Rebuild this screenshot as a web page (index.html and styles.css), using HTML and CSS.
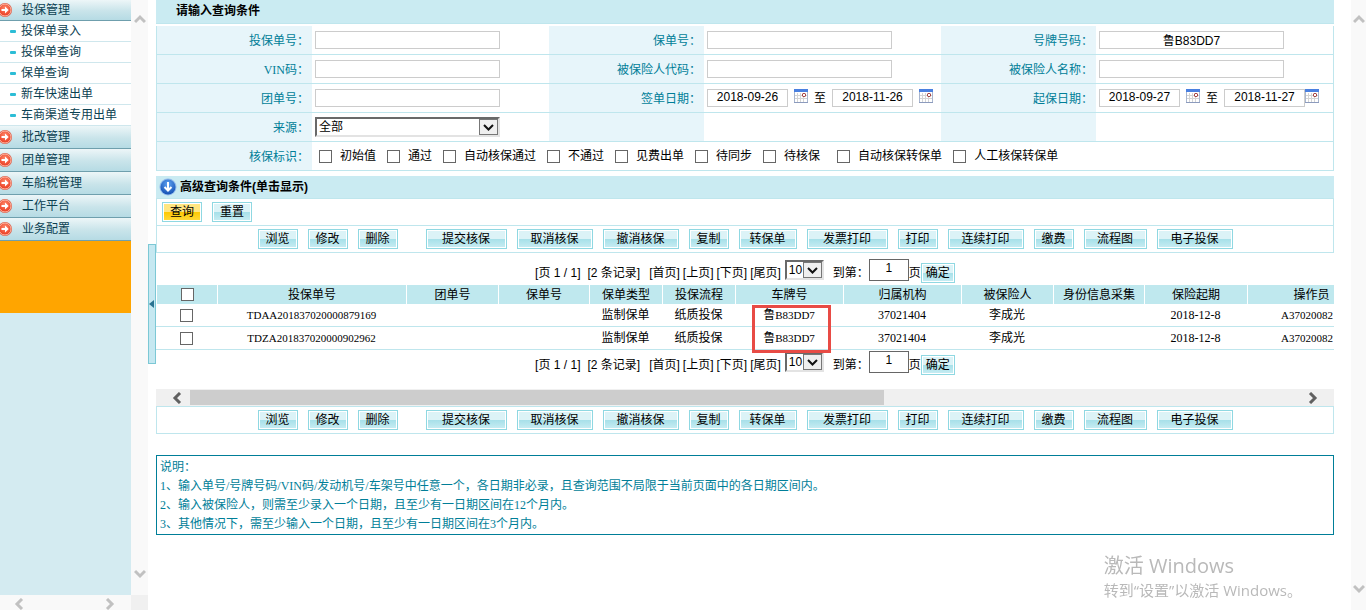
FILE: index.html
```html
<!DOCTYPE html>
<html lang="zh-CN">

<head>
  <meta charset="UTF-8" />
  <meta name="viewport" content="width=device-width, initial-scale=1.0" />
  <title>投保单查询</title>
  <link rel="stylesheet" href="styles.css">
</head>

<body>
  <!-- 图标 -->
  <svg class="icons" width="0" height="0">
    <defs>
      <radialGradient id="red" cx="50%" cy="35%" r="65%">
        <stop offset="0" stop-color="#ff8a6c" />
        <stop offset="1" stop-color="#e8391f" />
      </radialGradient>
      <radialGradient id="blue" cx="50%" cy="30%" r="70%">
        <stop offset="0" stop-color="#5fa4f2" />
        <stop offset="1" stop-color="#1450b4" />
      </radialGradient>
      <symbol id="i-go" viewBox="0 0 14 14">
        <circle cx="7" cy="7" r="7" fill="#d9553f" />
        <circle cx="7" cy="7" r="6" fill="url(#red)" stroke="#ffb9a6" stroke-width="1" />
        <path d="M3.5 6H7V3.5L10.7 7 7 10.500V8H3.500z" fill="#fff" />
      </symbol>
      <symbol id="i-down" viewBox="0 0 18 18">
        <circle cx="9" cy="9" r="8.500" fill="#8fb9ea" />
        <circle cx="9" cy="9" r="7.500" fill="url(#blue)" />
        <path d="M9 4v8M5.500 9L9 12.500 12.500 9" fill="none" stroke="#fff" stroke-width="2" />
      </symbol>
      <symbol id="i-cal" viewBox="0 0 14 14">
        <rect x="0.500" y="0.500" width="13" height="13" fill="#fff" stroke="#a9b6cf" />
        <rect width="14" height="3" fill="#4a80e0" />
        <path d="M1 6.500H13M1 9.500H13M3.500 4V13M6.500 4V13M9.500 4V13" stroke="#d4d4d4" />
        <path d="M0 13.500H14" stroke="#8c9bbd" />
        <rect x="8.500" y="4.500" width="3" height="3" rx="1" fill="#fff" stroke="#8e1414" />
      </symbol>
      <symbol id="i-up" viewBox="0 0 12 10">
        <path d="M1 8L6 3L11 8" fill="none" stroke="currentColor" stroke-width="3" />
      </symbol>
      <symbol id="i-dn" viewBox="0 0 12 10">
        <path d="M1 2L6 7L11 2" fill="none" stroke="currentColor" stroke-width="3" />
      </symbol>
      <symbol id="i-left" viewBox="0 0 10 12">
        <path d="M8 1L3 6L8 11" fill="none" stroke="currentColor" stroke-width="3" />
      </symbol>
      <symbol id="i-right" viewBox="0 0 10 12">
        <path d="M2 1L7 6L2 11" fill="none" stroke="currentColor" stroke-width="3" />
      </symbol>
    </defs>
  </svg>

  <div class="page">
    <!-- 左侧菜单 -->
    <aside class="side">
      <div class="side-body">
        <nav class="menu">
          <a class="menu-title first" href="#"><svg><use href="#i-go" /></svg>投保管理</a>
          <a class="menu-item" href="#">投保单录入</a>
          <a class="menu-item" href="#">投保单查询</a>
          <a class="menu-item" href="#">保单查询</a>
          <a class="menu-item" href="#">新车快速出单</a>
          <a class="menu-item" href="#">车商渠道专用出单</a>
          <a class="menu-title" href="#"><svg><use href="#i-go" /></svg>批改管理</a>
          <a class="menu-title" href="#"><svg><use href="#i-go" /></svg>团单管理</a>
          <a class="menu-title" href="#"><svg><use href="#i-go" /></svg>车船税管理</a>
          <a class="menu-title" href="#"><svg><use href="#i-go" /></svg>工作平台</a>
          <a class="menu-title" href="#"><svg><use href="#i-go" /></svg>业务配置</a>
          <div class="menu-block"></div>
        </nav>
        <div class="vscroll"><svg><use href="#i-up" /></svg><svg><use href="#i-dn" /></svg></div>
      </div>
      <div class="side-foot">
        <div class="side-hscroll"><svg><use href="#i-left" /></svg><svg><use href="#i-right" /></svg></div>
      </div>
    </aside>
    <div class="gutter"><button class="fold" aria-label="收起菜单"></button></div>

    <!-- 右侧内容 -->
    <main class="main">
      <h2 class="bar bar-query">请输入查询条件</h2>
      <table class="form">
        <colgroup>
          <col class="c-label"><col><col class="c-label"><col><col class="c-label"><col>
        </colgroup>
        <tr>
          <th><label for="proposalNo">投保单号：</label></th>
          <td><input class="text" id="proposalNo" type="text"></td>
          <th><label for="policyNo">保单号：</label></th>
          <td><input class="text" id="policyNo" type="text"></td>
          <th><label for="licenseNo">号牌号码：</label></th>
          <td><input class="text" id="licenseNo" type="text" value="鲁B83DD7"></td>
        </tr>
        <tr>
          <th><label for="vin">VIN码：</label></th>
          <td><input class="text" id="vin" type="text"></td>
          <th><label for="insuredCode">被保险人代码：</label></th>
          <td><input class="text" id="insuredCode" type="text"></td>
          <th><label for="insuredName">被保险人名称：</label></th>
          <td><input class="text" id="insuredName" type="text"></td>
        </tr>
        <tr>
          <th><label for="groupNo">团单号：</label></th>
          <td><input class="text" id="groupNo" type="text"></td>
          <th><label for="signStart">签单日期：</label></th>
          <td>
            <div class="dates">
              <input class="text date" id="signStart" type="text" value="2018-09-26">
              <button class="cal" aria-label="选择日期"><svg><use href="#i-cal" /></svg></button>
              <label for="signEnd">至</label>
              <input class="text date" id="signEnd" type="text" value="2018-11-26">
              <button class="cal" aria-label="选择日期"><svg><use href="#i-cal" /></svg></button>
            </div>
          </td>
          <th><label for="startDate">起保日期：</label></th>
          <td>
            <div class="dates">
              <input class="text date" id="startDate" type="text" value="2018-09-27">
              <button class="cal" aria-label="选择日期"><svg><use href="#i-cal" /></svg></button>
              <label for="endDate">至</label>
              <input class="text date" id="endDate" type="text" value="2018-11-27">
              <button class="cal close" aria-label="选择日期"><svg><use href="#i-cal" /></svg></button>
            </div>
          </td>
        </tr>
        <tr>
          <th><label for="source">来源：</label></th>
          <td><select class="select source" id="source"><option>全部</option></select></td>
          <th></th>
          <td></td>
          <th></th>
          <td></td>
        </tr>
        <tr>
          <th>核保标识：</th>
          <td colspan="5">
            <div class="flags">
              <label><input type="checkbox">初始值</label>
              <label><input type="checkbox">通过</label>
              <label><input type="checkbox">自动核保通过</label>
              <label><input type="checkbox">不通过</label>
              <label><input type="checkbox">见费出单</label>
              <label><input type="checkbox">待同步</label>
              <label class="wide"><input type="checkbox">待核保</label>
              <label><input type="checkbox">自动核保转保单</label>
              <label><input type="checkbox">人工核保转保单</label>
            </div>
          </td>
        </tr>
      </table>

      <h2 class="bar bar-more"><svg><use href="#i-down" /></svg>高级查询条件(单击显示)</h2>
      <div class="query">
        <button class="btn btn-main">查询</button>
        <button class="btn">重置</button>
      </div>
      <div class="tools">
        <button class="btn">浏览</button>
        <button class="btn">修改</button>
        <button class="btn">删除</button>
        <button class="btn btn-xl split">提交核保</button>
        <button class="btn btn-l">取消核保</button>
        <button class="btn btn-l">撤消核保</button>
        <button class="btn">复制</button>
        <button class="btn btn-s">转保单</button>
        <button class="btn btn-xl">发票打印</button>
        <button class="btn">打印</button>
        <button class="btn btn-l">连续打印</button>
        <button class="btn">缴费</button>
        <button class="btn btn-m">流程图</button>
        <button class="btn btn-l">电子投保</button>
      </div>

      <div class="pager pager-top">
        <span class="info">[页 1 / 1]</span>
        <span class="total">[2 条记录]</span>
        <a href="#">[首页]</a>
        <a href="#">[上页]</a>
        <a href="#">[下页]</a>
        <a href="#">[尾页]</a>
        <select class="select size" aria-label="每页条数"><option>10</option></select>
        <label for="pageTop">到第：</label>
        <input class="num" id="pageTop" type="text" value="1">
        <span>页</span>
        <button class="btn btn-go">确定</button>
      </div>

      <div class="result">
        <div class="grid-wrap">
          <table class="grid">
            <colgroup>
              <col class="g-check"><col class="g-no"><col class="g-92"><col class="g-91"><col class="g-73"><col class="g-73">
              <col class="g-plate"><col class="g-org"><col class="g-92"><col class="g-91"><col class="g-date"><col>
            </colgroup>
            <thead>
              <tr>
                <th><input type="checkbox" aria-label="全选"></th>
                <th>投保单号</th>
                <th>团单号</th>
                <th>保单号</th>
                <th>保单类型</th>
                <th>投保流程</th>
                <th>车牌号</th>
                <th>归属机构</th>
                <th>被保险人</th>
                <th>身份信息采集</th>
                <th>保险起期</th>
                <th>操作员</th>
              </tr>
            </thead>
            <tbody>
              <tr>
                <td><input type="checkbox" aria-label="选择"></td>
                <td><span class="code">TDAA201837020000879169</span></td>
                <td></td>
                <td></td>
                <td>监制保单</td>
                <td>纸质投保</td>
                <td>鲁<span class="code">B83DD7</span></td>
                <td>37021404</td>
                <td>李成光</td>
                <td></td>
                <td>2018-12-8</td>
                <td class="operator"><span class="code">A37020082</span></td>
              </tr>
              <tr>
                <td><input type="checkbox" aria-label="选择"></td>
                <td><span class="code">TDZA201837020000902962</span></td>
                <td></td>
                <td></td>
                <td>监制保单</td>
                <td>纸质投保</td>
                <td>鲁<span class="code">B83DD7</span></td>
                <td>37021404</td>
                <td>李成光</td>
                <td></td>
                <td>2018-12-8</td>
                <td class="operator"><span class="code">A37020082</span></td>
              </tr>
            </tbody>
          </table>
        </div>
        <div class="mark"></div>
      </div>

      <div class="pager pager-bottom">
        <span class="info">[页 1 / 1]</span>
        <span class="total">[2 条记录]</span>
        <a href="#">[首页]</a>
        <a href="#">[上页]</a>
        <a href="#">[下页]</a>
        <a href="#">[尾页]</a>
        <select class="select size" aria-label="每页条数"><option>10</option></select>
        <label for="pageBottom">到第：</label>
        <input class="num" id="pageBottom" type="text" value="1">
        <span>页</span>
        <button class="btn btn-go">确定</button>
      </div>

      <div class="hscroll">
        <svg><use href="#i-left" /></svg>
        <div class="track"><div class="thumb"></div></div>
        <svg><use href="#i-right" /></svg>
      </div>
      <div class="tools tools-bottom">
        <button class="btn">浏览</button>
        <button class="btn">修改</button>
        <button class="btn">删除</button>
        <button class="btn btn-xl split">提交核保</button>
        <button class="btn btn-l">取消核保</button>
        <button class="btn btn-l">撤消核保</button>
        <button class="btn">复制</button>
        <button class="btn btn-s">转保单</button>
        <button class="btn btn-xl">发票打印</button>
        <button class="btn">打印</button>
        <button class="btn btn-l">连续打印</button>
        <button class="btn">缴费</button>
        <button class="btn btn-m">流程图</button>
        <button class="btn btn-l">电子投保</button>
      </div>

      <div class="notes">
        <p>说明：</p>
        <p>1、输入单号/号牌号码/VIN码/发动机号/车架号中任意一个，各日期非必录，且查询范围不局限于当前页面中的各日期区间内。</p>
        <p>2、输入被保险人，则需至少录入一个日期，且至少有一日期区间在12个月内。</p>
        <p>3、其他情况下，需至少输入一个日期，且至少有一日期区间在3个月内。</p>
      </div>
    </main>
    <div class="vscroll page-scroll"><svg><use href="#i-up" /></svg><svg><use href="#i-dn" /></svg></div>
  </div>

  <div class="activate">
    <p class="activate-title">激活 Windows</p>
    <p>转到“设置”以激活 Windows。</p>
  </div>
</body>

</html>
```

FILE: styles.css
```css
* {
  box-sizing: border-box;
}

body {
  margin: 0;
  background: #fff;
  color: #000;
  font: 12px/18px "Liberation Sans", "Noto Sans CJK SC", sans-serif;
}

h2,
p {
  margin: 0;
}

a {
  color: inherit;
  text-decoration: none;
}

button,
input,
select {
  margin: 0;
  font-family: inherit;
  font-size: 12px;
  color: #000;
}

svg {
  display: block;
  flex: none;
}

.icons {
  position: absolute;
}

.page {
  display: flex;
  height: 100vh;
  overflow: hidden;
}

/* 左侧菜单 */
.side {
  display: flex;
  flex-direction: column;
  flex: none;
  width: 148px;
}

.side-body {
  display: flex;
  flex: 1;
  min-height: 0;
}

.menu {
  flex: 1;
  overflow: hidden;
  background: #d4ebf1;
  color: #0b4152;
}

.menu-title {
  display: flex;
  align-items: center;
  gap: 10px;
  height: 23px;
  margin-left: -2px;
  border-bottom: 1px solid #6f9fad;
  background: linear-gradient(#edf6f8, #c9e4ea 55%, #b6dbe4);
  line-height: 20px;
}

.menu-title.first {
  height: 21px;
}

.menu-title svg {
  width: 14px;
  height: 14px;
}

.menu-item {
  display: flex;
  align-items: center;
  height: 21px;
  padding-left: 10px;
  border-bottom: 1px solid #cfe7ed;
  background: #fff;
}

.menu-item::before {
  content: "";
  width: 6px;
  height: 3px;
  margin-right: 5px;
  border-radius: 1px;
  background: #2cbdd6;
}

.menu-block {
  height: 72px;
  background: #ffa500;
}

/* 滚动条 */
.vscroll {
  display: flex;
  flex-direction: column;
  align-items: center;
  justify-content: space-between;
  flex: none;
  width: 17px;
  padding: 14px 0 16px;
  background: #f9f9f9;
  color: #c1c1c1;
}

.vscroll svg {
  width: 12px;
  height: 10px;
}

.page-scroll {
  width: 15px;
}

.side-foot {
  display: flex;
  height: 15px;
  padding-right: 17px;
  background: #f0f0f0;
}

.side-hscroll {
  display: flex;
  flex: 1;
  align-items: center;
  justify-content: space-between;
  padding: 2px 16px 0 14px;
  background: #f9f9f9;
  color: #c1c1c1;
}

.side-hscroll svg,
.hscroll svg {
  width: 10px;
  height: 12px;
}

.gutter {
  display: flex;
  align-items: center;
  flex: none;
  width: 8px;
  padding-bottom: 2px;
}

.fold {
  display: flex;
  align-items: center;
  width: 8px;
  height: 120px;
  padding: 0;
  border: 1px solid #7cc8d5;
  background: #c5e8f1;
}

.fold::before {
  content: "";
  border: 4px solid transparent;
  border-left-width: 0;
  border-right: 5px solid #2b7391;
}

/* 右侧内容 */
.main {
  flex: 1;
  min-width: 0;
  margin-right: 17px;
  overflow: hidden;
}

.bar {
  display: flex;
  align-items: center;
  border-bottom: 1px solid #bfe6ed;
  background: #caebf2;
  font-size: 12px;
  line-height: 18px;
}

.bar-query {
  height: 24px;
  padding: 0 20px 1px;
  margin-bottom: 2px;
}

.bar-more {
  height: 23px;
  padding-left: 3px;
  margin-top: 5px;
  gap: 3px;
}

.bar-more svg {
  width: 18px;
  height: 18px;
}

.form {
  width: 100%;
  table-layout: fixed;
  border-collapse: separate;
  border-spacing: 0;
  border: solid #bfe6ed;
  border-width: 0 1px;
}

.c-label {
  width: 155px;
}

.form th,
.form td {
  height: 29px;
  padding: 0 3px;
  border-bottom: 1px solid #bfe6ed;
}

.form th {
  padding-top: 2px;
  background: #e7f5fa;
  color: #007e98;
  font-family: "Liberation Serif", "Noto Sans CJK SC", serif;
  font-weight: normal;
  text-align: right;
}

.text {
  display: block;
  width: 185px;
  height: 18px;
  padding: 0 2px 2px;
  border: 1px solid #ccc;
  background: #fff;
  text-align: center;
}

.date {
  width: 81px;
}

.dates {
  display: flex;
  align-items: center;
}

.cal {
  width: 14px;
  height: 14px;
  padding: 0;
  margin: 0 6px 5px;
  border: 0;
  background: none;
}

.cal.close {
  margin: 0 0 5px;
}

.cal svg {
  width: 14px;
  height: 14px;
}

.dates label {
  margin-right: 6px;
}

.select {
  display: block;
  appearance: none;
  padding: 0 2px;
  border: 2px solid;
  border-color: #696969 #e3e3e3 #e3e3e3 #696969;
  border-radius: 0;
  background: #fff url("data:image/svg+xml,%3Csvg xmlns='http://www.w3.org/2000/svg' width='19' height='16'%3E%3Crect x='.5' y='.5' width='18' height='15' fill='%23efefef' stroke='%23777'/%3E%3Cpath d='M5 6l4.500 4.500L14 6' fill='none' stroke='%23111' stroke-width='2'/%3E%3C/svg%3E") no-repeat right center;
}

.source {
  width: 185px;
  height: 20px;
}

input[type="checkbox"] {
  appearance: none;
  flex: none;
  width: 13px;
  height: 13px;
  border: 1px solid #666;
  background: #fff;
}

.flags {
  display: flex;
  gap: 11px;
  padding-left: 4px;
}

.flags label {
  display: flex;
  align-items: center;
  gap: 8px;
}

.flags .wide {
  margin-right: 6px;
}

/* 按钮 */
.btn {
  flex: none;
  width: 40px;
  height: 20px;
  padding: 0;
  border: 1px solid #8fd8e2;
  box-shadow: inset 0 0 0 1px #fff;
  background: linear-gradient(#dcf3f7 50%, #a6e0e9 50%, #c9edf3);
  line-height: 18px;
}

.btn-main {
  background: linear-gradient(#ffe680 50%, #fdc800 50%, #ffdb3d);
}

.btn-s {
  width: 58px;
}

.btn-m {
  width: 63px;
}

.btn-l {
  width: 76px;
}

.btn-xl {
  width: 81px;
}

.query,
.tools {
  display: flex;
  align-items: center;
  gap: 10px;
  height: 27px;
  border: solid #bfe6ed;
  border-width: 0 1px 1px;
}

.query {
  padding-left: 5px;
}

.tools {
  justify-content: center;
}

.tools .split {
  margin-left: 18px;
}

.tools-bottom {
  height: 28px;
  border-top-width: 1px;
}

/* 分页 */
.pager {
  display: flex;
  align-items: center;
  justify-content: center;
  height: 27px;
  line-height: 20px;
}

.pager-top {
  margin-top: 5px;
}

.pager-bottom {
  margin-bottom: 12px;
}

.pager a,
.pager span,
.pager label {
  padding-top: 2px;
}

.pager a {
  margin-right: 3px;
}

.pager .info {
  margin-right: 7px;
}

.pager .total {
  margin-right: 9px;
}

.pager .size {
  width: 39px;
  height: 20px;
  margin: 0 9px 3px 1px;
}

.num {
  width: 40px;
  height: 22px;
  margin: 0 0 4px;
  padding: 0 0 3px;
  border: 1px solid #666;
  text-align: center;
}

.btn-go {
  width: 34px;
  margin-top: 3px;
}

/* 查询结果 */
.result {
  position: relative;
}

.grid-wrap {
  overflow: hidden;
}

.grid {
  width: 100%;
  min-width: 1219px;
  table-layout: fixed;
  border-collapse: separate;
  border-spacing: 0;
  font-family: "Liberation Serif", "Noto Sans CJK SC", serif;
  text-align: center;
}

.g-check { width: 61px; }
.g-no { width: 189px; }
.g-91 { width: 91px; }
.g-92 { width: 92px; }
.g-73 { width: 73px; }
.g-plate { width: 108px; }
.g-org { width: 118px; }
.g-date { width: 103px; }

.grid th {
  height: 19px;
  padding: 0;
  border-left: 1px solid #fff;
  background: #bfe8ee;
  font-weight: normal;
}

.grid td {
  height: 23px;
  padding: 0;
  border-bottom: 1px solid #bfe6ed;
}

.grid .operator {
  padding-right: 8px;
}

.grid input {
  display: block;
  margin: 0 auto;
}

.code {
  font-size: 11px;
}

/* 车牌号标记框 */
.mark {
  position: absolute;
  top: 20px;
  left: 596px;
  width: 79px;
  height: 48px;
  border: 3px solid #e84b45;
}

.hscroll {
  display: flex;
  align-items: center;
  height: 17px;
  padding: 0 16px;
  background: #f0f0f0;
  color: #606060;
}

.track {
  flex: 1;
  padding: 1px 8px;
}

.thumb {
  width: calc(100% * 5 / 8);
  height: 15px;
  background: #cdcdcd;
}

/* 说明 */
.notes {
  margin-top: 21px;
  padding: 2px 3px 0;
  border: 1px solid #007e98;
  color: #007e98;
  font-family: "Liberation Serif", "Noto Sans CJK SC", serif;
  line-height: 19px;
}

.activate {
  position: fixed;
  right: 64px;
  bottom: 8px;
  color: #b9b9b9;
  font: 15px/24px "Open Sans", "Noto Sans CJK SC", sans-serif;
}

.activate-title {
  font-size: 20px;
}
```
